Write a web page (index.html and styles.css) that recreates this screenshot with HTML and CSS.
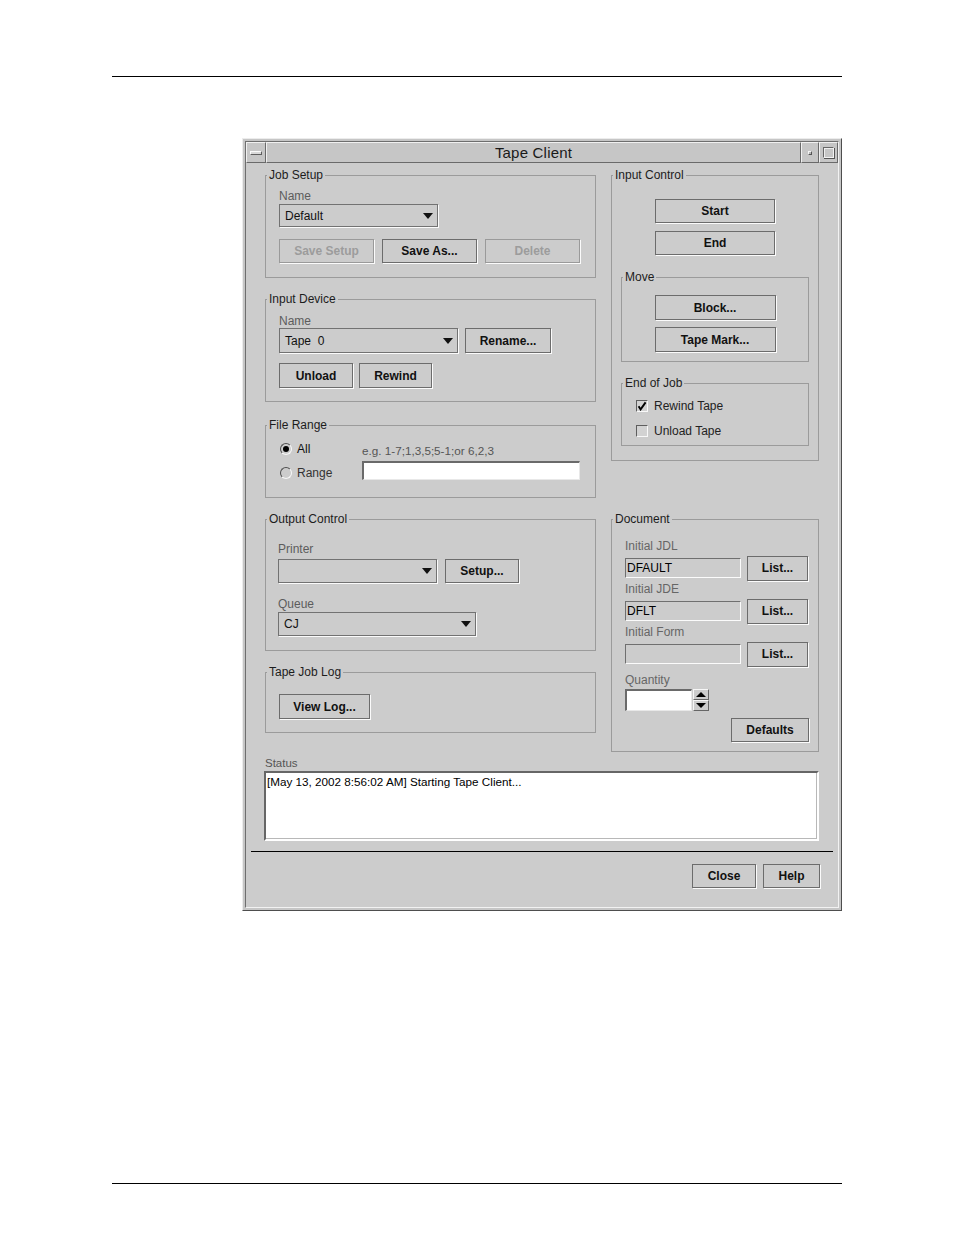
FILE: index.html
```html
<!DOCTYPE html>
<html>
<head>
<meta charset="utf-8">
<title>Tape Client</title>
<link rel="stylesheet" href="styles.css">
</head>
<body>
<div class="rule rule-top"></div>
<div class="window">
  <div class="inner">
    <div class="titlebar">
      <div class="tb-seg tb-menu"><span class="menu-bar"></span></div>
      <div class="tb-seg tb-title">Tape Client</div>
      <div class="tb-seg tb-min"><span class="min-dot"></span></div>
      <div class="tb-seg tb-max"><span class="max-sq"></span></div>
    </div>
    <div class="client">
      <div class="columns">
        <div class="col col-left">
          <fieldset class="group g-job">
            <legend>Job Setup</legend>
            <div class="gb pad13">
              <div class="lbl js-lbl">Name</div>
              <div class="combo w159 h23 js-combo"><span>Default</span><span class="arrow"></span></div>
              <div class="row gap8 js-btns">
                <div class="btn disabled w95 h24">Save Setup</div>
                <div class="btn w95 h24">Save As...</div>
                <div class="btn disabled w95 h24">Delete</div>
              </div>
            </div>
          </fieldset>

          <fieldset class="group g-dev">
            <legend>Input Device</legend>
            <div class="gb pad13">
              <div class="lbl dev-lbl">Name</div>
              <div class="row gap7">
                <div class="combo w179 h25"><span>Tape&nbsp; 0</span><span class="arrow"></span></div>
                <div class="btn w86 h25">Rename...</div>
              </div>
              <div class="row gap6 dev-btns">
                <div class="btn w74 h25">Unload</div>
                <div class="btn w73 h25">Rewind</div>
              </div>
            </div>
          </fieldset>

          <fieldset class="group g-range">
            <legend>File Range</legend>
            <div class="gb fr-grid">
              <div class="radio-item"><span class="radio"><span class="dot"></span></span><span class="radio-text">All</span></div>
              <div class="hint">e.g. 1-7;1,3,5;5-1;or 6,2,3</div>
              <div class="radio-item range-item"><span class="radio"></span><span class="radio-text dim">Range</span></div>
              <div class="field white w218 h19"></div>
            </div>
          </fieldset>

          <fieldset class="group g-out">
            <legend>Output Control</legend>
            <div class="gb pad12">
              <div class="lbl out-lbl1">Printer</div>
              <div class="row gap8 out-row1">
                <div class="combo w159 h24"><span></span><span class="arrow"></span></div>
                <div class="btn w74 h24">Setup...</div>
              </div>
              <div class="lbl out-lbl2">Queue</div>
              <div class="combo w198 h24 out-combo2"><span>CJ</span><span class="arrow"></span></div>
            </div>
          </fieldset>

          <fieldset class="group g-log">
            <legend>Tape Job Log</legend>
            <div class="gb pad13">
              <div class="btn w91 h25 log-btn">View Log...</div>
            </div>
          </fieldset>
        </div>

        <div class="col col-right">
          <fieldset class="group g-ictl">
            <legend>Input Control</legend>
            <div class="gb ic-body">
              <div class="btn w120 h24 ic-start">Start</div>
              <div class="btn w120 h24 ic-end">End</div>
              <fieldset class="group g-move">
                <legend>Move</legend>
                <div class="gb move-body">
                  <div class="btn w121 h25 mv-block">Block...</div>
                  <div class="btn w121 h25 mv-mark">Tape Mark...</div>
                </div>
              </fieldset>
              <fieldset class="group g-eoj">
                <legend>End of Job</legend>
                <div class="gb eoj-body">
                  <div class="check-row cr1">
                    <span class="checkbox"><svg width="10" height="10" viewBox="0 0 10 10"><path d="M1.6 5.2 L3.6 8.4 L8.6 1.4" fill="none" stroke="#000" stroke-width="1.9"/></svg></span>
                    <span>Rewind Tape</span>
                  </div>
                  <div class="check-row cr2">
                    <span class="checkbox"></span>
                    <span>Unload Tape</span>
                  </div>
                </div>
              </fieldset>
            </div>
          </fieldset>

          <fieldset class="group g-doc">
            <legend>Document</legend>
            <div class="gb doc-body">
              <div class="lbl doc-lbl">Initial JDL</div>
              <div class="row gap6 doc-row">
                <div class="field w116 h20">DFAULT</div>
                <div class="btn w61 h25">List...</div>
              </div>
              <div class="lbl doc-lbl">Initial JDE</div>
              <div class="row gap6 doc-row">
                <div class="field w116 h20">DFLT</div>
                <div class="btn w61 h25">List...</div>
              </div>
              <div class="lbl doc-lbl">Initial Form</div>
              <div class="row gap6 doc-row">
                <div class="field w116 h20"></div>
                <div class="btn w61 h25">List...</div>
              </div>
              <div class="lbl qty-lbl">Quantity</div>
              <div class="spinner">
                <div class="field white w67 h22"></div>
                <div class="spin-btns">
                  <div class="spin-btn"><span class="tri-up"></span></div>
                  <div class="spin-btn"><span class="tri-down"></span></div>
                </div>
              </div>
              <div class="btn w78 h24 defaults">Defaults</div>
            </div>
          </fieldset>
        </div>
      </div>

      <div class="status-lbl">Status</div>
      <div class="status-box">[May 13, 2002 8:56:02 AM] Starting Tape Client...</div>
      <div class="sep"></div>
      <div class="footer">
        <div class="btn w64 h24">Close</div>
        <div class="btn w57 h24">Help</div>
      </div>
    </div>
  </div>
</div>
<div class="rule rule-bottom"></div>
</body>
</html>
```

FILE: styles.css
```css
* { box-sizing: border-box; }
html, body { margin: 0; padding: 0; background: #fff; }
body { font-family: "Liberation Sans", Arial, sans-serif; font-size: 12px; color: #111; }

.rule { margin-left: 112px; width: 730px; height: 1px; background: #000; }
.rule-top { margin-top: 76px; }
.rule-bottom { margin-top: 272px; }

/* window frame */
.window {
  margin: 61px 0 0 242px;
  width: 600px; height: 773px;
  background: #c6c6c6;
  border: 1px solid; border-color: #ececec #4e4e4e #4e4e4e #ececec;
  padding: 2px;
}
.inner {
  height: 100%;
  border: 1px solid; border-color: #6e6e6e #f2f2f2 #f2f2f2 #6e6e6e;
  background: #cccccc;
  display: flex; flex-direction: column;
}
.titlebar { display: flex; height: 21px; flex: none; }
.tb-seg {
  border: 1px solid; border-color: #f0f0f0 #6a6a6a #6a6a6a #f0f0f0;
  background: #c6c6c6;
  display: flex; align-items: center; justify-content: center;
}
.tb-menu { width: 20px; }
.tb-title { flex: 1; font-size: 15px; color: #1a1a1a; letter-spacing: 0.2px; }
.tb-min { width: 18px; }
.tb-max { width: 19px; }
.menu-bar { width: 12px; height: 4px; border: 1px solid; border-color: #fafafa #5e5e5e #5e5e5e #fafafa; background: #d8d8d8; }
.min-dot { width: 4px; height: 4px; border: 1px solid; border-color: #f4f4f4 #555 #555 #f4f4f4; background: #b8b8b8; }
.max-sq { width: 11px; height: 11px; border: 1px solid; border-color: #666 #f4f4f4 #f4f4f4 #666; box-shadow: 1px 1px 0 #555, inset 1px 1px 0 #eee; }

/* client */
.client { flex: 1; display: flex; flex-direction: column; padding-top: 5px; }
.columns { display: flex; gap: 15px; height: 584px; padding-left: 19px; align-items: flex-start; flex: none; }
.col { display: flex; flex-direction: column; }
.col-left { width: 331px; }
.col-right { width: 208px; }

/* group boxes */
fieldset.group { margin: 0; padding: 0; border: 1px solid #9b9b9b; min-width: 0; }
fieldset.group > legend { margin-left: 1px; padding: 0 2px; font-size: 12px; line-height: 14px; color: #1c1c1c; }
.gb { display: flex; flex-direction: column; align-items: flex-start; }
.pad13 { padding-left: 13px; }
.pad12 { padding-left: 12px; }

.g-job { height: 110px; }
.g-dev { height: 110px; margin-top: 14px !important; }
.g-range { height: 80px; margin-top: 16px !important; }
.g-out { height: 139px; margin-top: 14px !important; }
.g-log { height: 68px; margin-top: 14px !important; }
.g-ictl { height: 293px; }
.g-doc { height: 240px; margin-top: 51px !important; }

.row { display: flex; align-items: center; }
.gap6 { gap: 6px; }
.gap7 { gap: 7px; }
.gap8 { gap: 8px; }

.lbl { font-size: 12px; line-height: 14px; color: #5c5c5c; }

/* sizes */
.w57 { width: 57px; } .w61 { width: 61px; } .w64 { width: 64px; } .w67 { width: 67px; }
.w73 { width: 73px; } .w74 { width: 74px; } .w78 { width: 78px; } .w86 { width: 86px; }
.w91 { width: 91px; } .w95 { width: 95px; } .w116 { width: 116px; } .w120 { width: 120px; }
.w121 { width: 121px; } .w159 { width: 159px; } .w179 { width: 179px; } .w198 { width: 198px; }
.w218 { width: 218px; }
.h19 { height: 19px; } .h20 { height: 20px; } .h22 { height: 22px; } .h23 { height: 23px; }
.h24 { height: 24px; } .h25 { height: 25px; }

/* controls */
.btn {
  display: flex; align-items: center; justify-content: center; flex: none;
  border: 1px solid #6c6c6c;
  box-shadow: 1px 1px 0 #fbfbfb;
  background: #cccccc;
  font-weight: bold; font-size: 12px; color: #111;
  white-space: nowrap;
}
.btn.disabled { color: #9c9c9c; border-color: #9a9a9a; }

.combo {
  display: flex; align-items: center; justify-content: space-between; flex: none;
  border: 1px solid #727272;
  box-shadow: 1px 1px 0 #fbfbfb;
  background: #cccccc;
  padding: 0 4px 0 5px;
  font-size: 12px; color: #111;
}
.arrow { flex: none; width: 0; height: 0; border-left: 5px solid transparent; border-right: 5px solid transparent; border-top: 6px solid #111; }

.field {
  display: flex; align-items: center; flex: none;
  border: 1px solid; border-color: #6f6f6f #fbfbfb #fbfbfb #6f6f6f;
  background: #cccccc;
  padding-left: 1px;
  font-size: 12px; color: #000;
}
.field.white { background: #fff; border-width: 2px 1px 1px 2px; border-color: #6a6a6a #e8e8e8 #e8e8e8 #6a6a6a; }

/* job setup */
.js-lbl { margin-top: 7px; }
.js-combo { margin-top: 1px; }
.js-btns { margin-top: 12px; }

/* input device */
.dev-lbl { margin-top: 8px; }
.dev-btns { margin-top: 10px; }

/* file range */
.fr-grid {
  display: grid;
  grid-template-columns: 82px 218px;
  grid-template-rows: 16px 19px;
  row-gap: 3px;
  padding: 10px 0 0 14px;
  align-items: start;
}
.radio-item { display: flex; align-items: center; gap: 5px; height: 14px; }
.range-item { margin-top: 5px; }
.radio {
  flex: none;
  width: 12px; height: 12px; border-radius: 50%;
  border: 1px solid; border-color: #4e4e4e #f8f8f8 #f8f8f8 #4e4e4e;
  background: #cccccc;
  display: flex; align-items: center; justify-content: center;
}
.radio .dot { flex: none; width: 6px; height: 6px; border-radius: 50%; background: #000; }
.radio-text { font-size: 12px; line-height: 14px; color: #111; }
.radio-text.dim { color: #333; }
.hint { align-self: end; font-size: 11.7px; line-height: 14px; color: #555; white-space: nowrap; }

/* output control */
.out-lbl1 { margin-top: 16px; }
.out-row1 { margin-top: 3px; }
.out-lbl2 { margin-top: 14px; }
.out-combo2 { margin-top: 1px; }

/* log */
.log-btn { margin-top: 15px; }

/* input control */
.ic-body { align-items: center; padding: 0 9px; }
.ic-start { margin-top: 17px; }
.ic-end { margin-top: 8px; }
.g-move { align-self: stretch; height: 92px; margin-top: 15px !important; }
.move-body { align-items: center; }
.mv-block { margin-top: 11px; }
.mv-mark { margin-top: 7px; }
.g-eoj { align-self: stretch; height: 70px; margin-top: 14px !important; }
.eoj-body { padding-left: 14px; }
.check-row { display: flex; align-items: center; gap: 6px; height: 14px; line-height: 14px; font-size: 12px; color: #222; }
.cr1 { margin-top: 9px; }
.cr2 { margin-top: 11px; }
.checkbox {
  flex: none;
  width: 12px; height: 12px;
  border: 1px solid; border-color: #5e5e5e #f8f8f8 #f8f8f8 #5e5e5e;
  background: #d2d2d2;
  display: flex; align-items: center; justify-content: center;
}
.checkbox svg { display: block; }

/* document */
.doc-body { padding: 12px 9px 0 13px; }
.doc-lbl { margin-top: 1px; color: #666; }
.doc-row { margin-top: 2px; height: 26px; }
.qty-lbl { margin-top: 6px; color: #666; }
.spinner { display: flex; margin-top: 2px; gap: 1px; }
.spin-btns { display: flex; flex-direction: column; }
.spin-btn {
  width: 16px; height: 11px;
  border: 1px solid; border-color: #f6f6f6 #666 #666 #f6f6f6;
  background: #cccccc;
  display: flex; align-items: center; justify-content: center;
}
.tri-up { width: 0; height: 0; border-left: 5px solid transparent; border-right: 5px solid transparent; border-bottom: 5px solid #000; }
.tri-down { width: 0; height: 0; border-left: 5px solid transparent; border-right: 5px solid transparent; border-top: 5px solid #000; }
.defaults { align-self: flex-end; margin-top: 7px; }

/* status & footer */
.status-lbl { margin: 4px 0 0 19px; font-size: 11.5px; line-height: 14px; color: #555; flex: none; }
.status-box {
  margin: 1px 0 0 18px; width: 555px; height: 70px; flex: none;
  background: #fff;
  border: 2px solid; border-color: #666 #fff #fff #666;
  box-shadow: inset -1px -1px 0 #b8b8b8;
  padding: 2px 0 0 1px;
  font-size: 11.7px; line-height: 14px; color: #000;
}
.sep { margin: 10px 5px 0 5px; height: 1px; background: #000; flex: none; }
.footer { display: flex; justify-content: flex-end; gap: 7px; margin-top: 12px; padding-right: 18px; flex: none; }
```
